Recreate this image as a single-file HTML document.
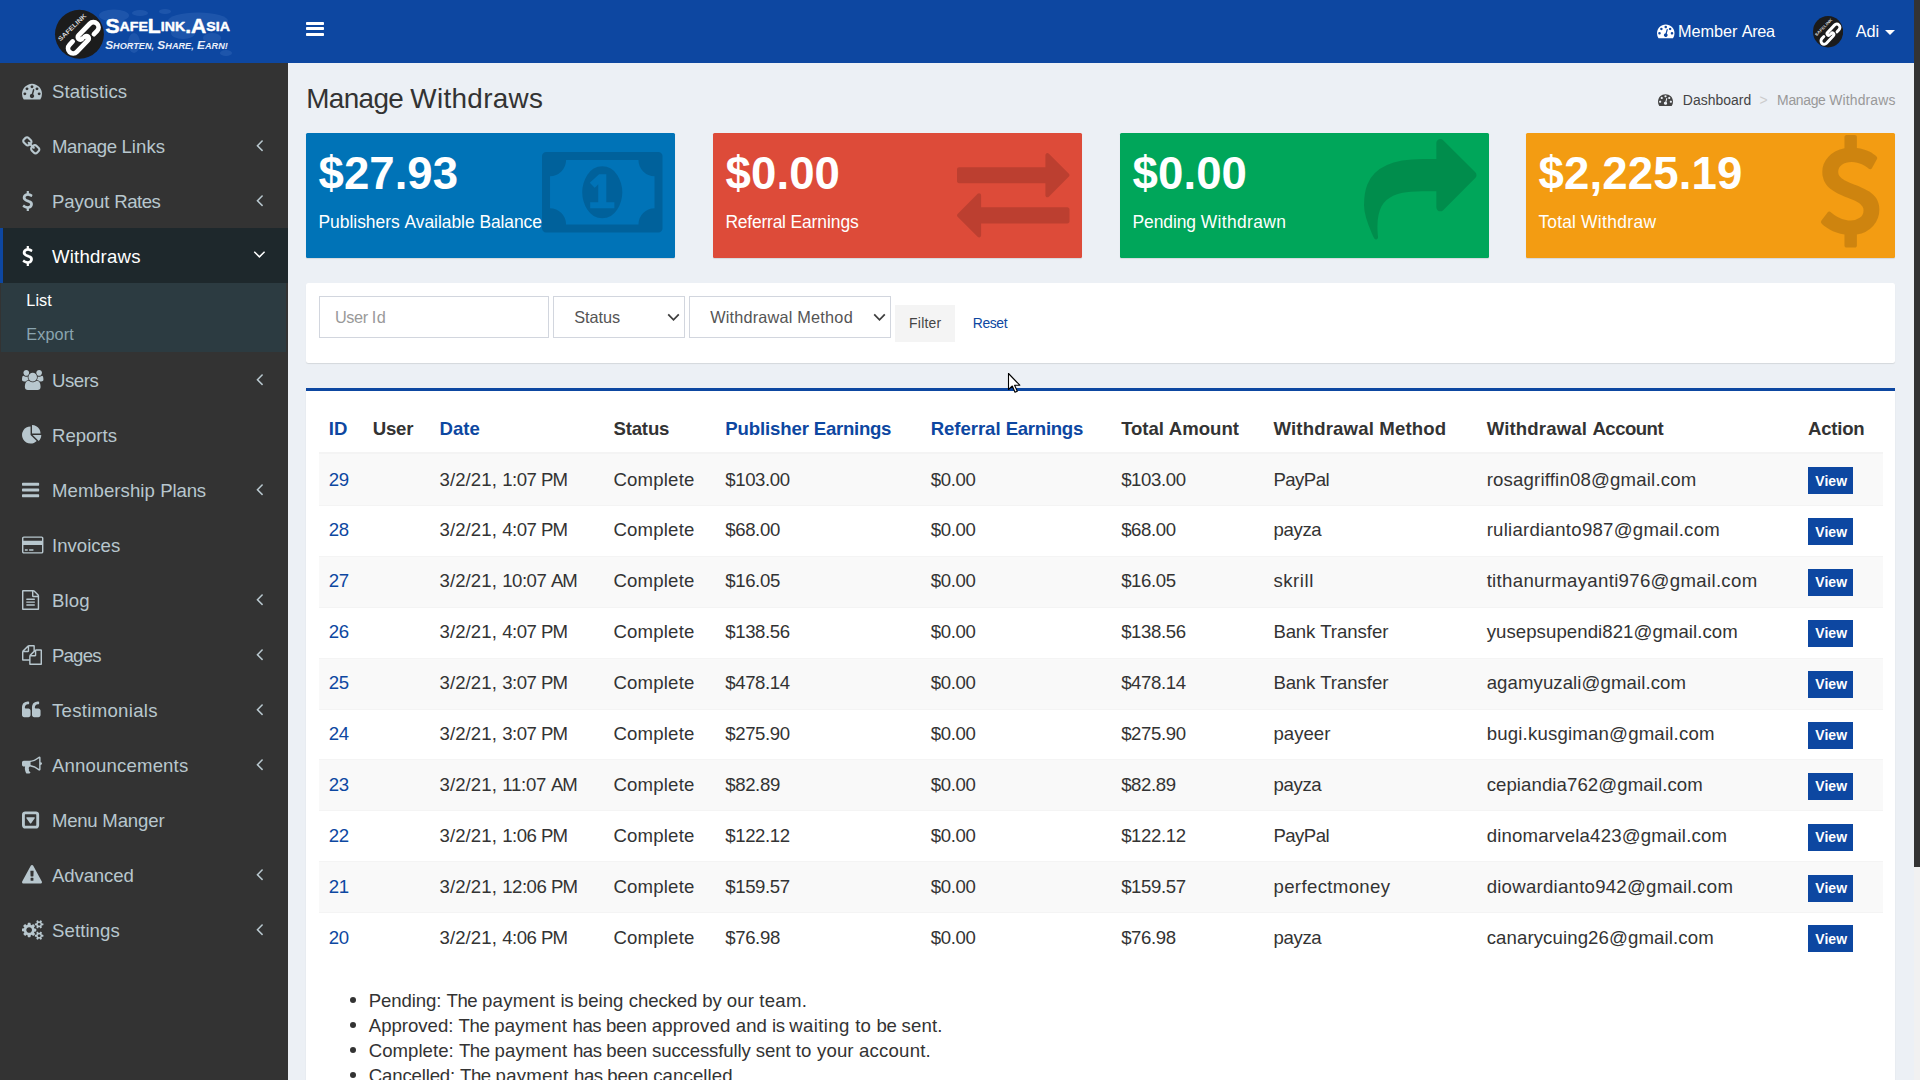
<!DOCTYPE html>
<html lang="en"><head>
<meta charset="utf-8">
<title>Manage Withdraws</title>
<style>
*{box-sizing:border-box}
html,body{margin:0;padding:0}
html{width:1920px;height:1080px;overflow:hidden;background:#ecf0f5}
body{width:1920px;height:1080px;overflow:hidden;position:relative;background:#ecf0f5;
 font-family:"Liberation Sans",sans-serif;font-size:20px;line-height:25px;color:#333;
 -webkit-font-smoothing:auto}
a{color:#0d47a1;text-decoration:none}
ul{margin:0;padding:0;list-style:none}
svg.fa{display:inline-block;fill:currentColor;vertical-align:baseline;overflow:visible;flex:none}
.t{white-space:pre;line-height:0}

/* header */
.main-header{position:absolute;left:0;top:0;width:1913.75px;height:62.5px;background:#0d47a1;z-index:5}
.logo{position:absolute;left:0;top:0;width:287.5px;height:62.5px;display:block}
.logo svg{position:absolute;left:0;top:0}
.sidebar-toggle{position:absolute;left:306px;top:21.6px;width:18px;height:15px}
.sidebar-toggle i{position:absolute;left:0;width:18px;height:3.3px;border-radius:.8px;background:#fff}
.nav-right{position:absolute;left:0;top:0;width:1913.75px;height:62.5px;color:#fff;font-size:17.5px;line-height:25px}
.nav-right a{color:#fff}
.nav-member{position:absolute;left:1678px;top:18.75px;height:25px;white-space:nowrap}
.nav-ic{position:absolute;left:1657px;top:21.5px;line-height:0}
.nav-user{position:absolute;left:1812.5px;top:18.75px;height:25px;white-space:nowrap}
.avatar{position:absolute;left:1812.7px;top:16.4px;width:30.2px;height:31.4px}
.caret{position:absolute;left:1885.3px;top:29.8px;width:0;height:0;border-left:5px solid transparent;border-right:5px solid transparent;border-top:5.4px solid #fff}

/* sidebar */
.main-sidebar{position:absolute;left:0;top:0;width:287.5px;height:1080px;background:#333;padding-top:62.5px;z-index:2}
.sidebar-menu>li{position:relative}
.sidebar-menu>li>a{display:block;height:55px;padding:15px 6.25px 15px 18.75px;border-left:3px solid transparent;color:#b8c7ce;white-space:nowrap;line-height:25px;font-size:20px}
.sidebar-menu>li>a{position:relative;padding-left:49px}
.sidebar-menu>li>a>.icw{position:absolute;left:19.1px;top:18.4px;width:25px;height:20px;line-height:0}
svg.fa{vertical-align:top}
.sidebar-menu>li.active>a{background:#1e282c;color:#fff;border-left-color:#0d47a1}
.sidebar-menu .arr{position:absolute;left:246.8px;top:17.5px;width:20px;height:20px;line-height:0;text-align:center}
.sidebar-menu .active .arr{top:16.9px}
.treeview-menu{margin:0 1.25px;padding:0 0 .5px 6.25px;background:#2c3b41}
.treeview-menu>li>a{display:block;height:34.375px;padding:4.6875px 6.25px 4.6875px 18.75px;color:#8aa4af;font-size:17.5px;line-height:25px}
.treeview-menu>li.active>a{color:#fff}

/* content */
.content-wrapper{position:absolute;left:287.5px;top:62.5px;width:1626.25px;height:1017.5px;background:#ecf0f5}
.content-header{position:relative;padding:18.75px 18.75px 0 18.75px;height:51.75px}
.content-header h1{margin:0;font-size:30px;line-height:33px;font-weight:400;color:#333}
.breadcrumb{position:absolute;top:26.5px;left:0;width:1626.25px;height:21.43px;font-size:15px;line-height:21.43px;white-space:nowrap;color:#999}
.breadcrumb>*{position:absolute;top:0}
.breadcrumb .bic{line-height:0;color:#444;top:3.2px}
.breadcrumb a{color:#444}
.breadcrumb .sep{color:#ccc}
.content{padding:18.75px 18.75px 0 18.75px}
.row{position:relative;height:150px}
.col{position:absolute;top:0;width:369px}
.small-box{position:relative;height:125px;margin-bottom:25px;color:#fff;overflow:hidden;border-radius:1.5px;box-shadow:0 1px 1px rgba(0,0,0,.1)}
.small-box .inner{padding:12.5px}
.small-box h3{margin:0 0 11px 0;font-size:47.5px;line-height:52.25px;font-weight:700;white-space:nowrap}
.small-box p{margin:0;font-size:18.75px;line-height:26.8px}
.small-box .icon{position:absolute;color:rgba(0,0,0,.15);line-height:0}
.bg-blue{background:#0073b7}.bg-red{background:#dd4b39}.bg-green{background:#00a65a}.bg-yellow{background:#f39c12}
.box{position:relative;background:#fff;border-radius:2.5px;box-shadow:0 1px 1px rgba(0,0,0,.1);margin-bottom:25px}
.box-filter{height:80px;padding:12.5px;border-top:0}
.box-primary{border-top:3px solid #0d47a1;padding:12.5px;height:720px;border-radius:0;margin-bottom:0}
.fc{position:absolute;top:13.25px;height:41.5px;border:1px solid #d2d6de;background:#fff;font-size:17.5px;line-height:25px;color:#555;white-space:nowrap;padding:7.25px 0 0 15px}
.fc.sel{padding-left:20px}
.fc .ph{color:#999}
.fc .chev{position:absolute;top:16.2px}
.btn-filter{position:absolute;left:589px;top:21.75px;width:60px;height:37px;background:#f4f4f4;border:1px solid #f4f4f4;border-radius:0;font-size:15px;line-height:22.5px;color:#444;text-align:center;padding:6px 0}
.btn-reset{position:absolute;left:654px;top:21.75px;height:37px;font-size:15px;line-height:22.5px;padding:7.25px 12.5px;color:#0d47a1}

table{border-collapse:separate;border-spacing:0;width:100%;font-size:20px;line-height:28.57px}
th,td{padding:10px;text-align:left;vertical-align:top;white-space:nowrap}
th{font-weight:700;height:50.57px;border-bottom:2px solid #f4f4f4}
td{height:50.9px;border-top:1px solid #f4f4f4;position:relative}
tbody tr:first-child td{border-top:0;padding-top:11px}
tbody tr:first-child .btn-view{top:13.35px}
tbody tr:nth-child(odd) td{background:#f9f9f9}
.btn-view{position:absolute;left:10px;top:12.35px;width:45px;height:27px;display:block;background:#0d47a1;color:#fff;font-size:15px;line-height:22.5px;font-weight:700;padding:2.25px 0 0 7.25px;border-radius:0}
.notes{margin:24.1px 0 0 0;padding:0 0 0 50px;list-style:disc;font-size:20px;line-height:25px}
.notes li{white-space:nowrap}

/* scrollbar */
.sb-track{position:absolute;left:1913.75px;top:0;width:6.25px;height:1080px;background:#f1f1f1;z-index:9}
.sb-thumb{position:absolute;left:1913.75px;top:0;width:6.25px;height:867px;background:#333;z-index:10}
.cursor{position:absolute;left:1007px;top:372px;z-index:20}

</style>
</head>
<body>
<header class="main-header">
<a class="logo" href="#"><svg width="287.5" height="62.5" viewBox="0 0 287.5 62.5">
<g fill="#5f8fd6" opacity=".2">
<ellipse cx="114" cy="15.5" rx="15" ry="6"></ellipse><ellipse cx="121" cy="25" rx="8" ry="5"></ellipse><ellipse cx="134" cy="43" rx="6" ry="10"></ellipse>
<ellipse cx="140" cy="13" rx="8" ry="3"></ellipse><ellipse cx="165" cy="11.5" rx="6" ry="2.5"></ellipse>
<ellipse cx="198" cy="21" rx="30" ry="8.5"></ellipse><ellipse cx="183" cy="33" rx="12" ry="6"></ellipse>
<ellipse cx="226" cy="53" rx="6" ry="3"></ellipse><ellipse cx="212" cy="38" rx="9" ry="5"></ellipse>
</g>
<circle cx="79.45" cy="34.25" r="24.45" fill="#1c1c1c"></circle>
<g transform="translate(83.3,37.8) rotate(-46) scale(1.0)" fill="none" stroke="#fff" stroke-width="4.7" stroke-linecap="round" stroke-linejoin="round"><path d="M10.00,5.10 L14.60,5.10 A5.1,5.1 0 0 0 14.60,-5.10 L-1.60,-5.10 A2.45,2.45 0 0 0 -1.60,-0.20"></path><path d="M-10.00,-5.10 L-14.60,-5.10 A5.1,5.1 0 0 0 -14.60,5.10 L1.60,5.10 A2.45,2.45 0 0 0 1.60,0.20"></path></g>
<text transform="translate(60.6,41.6) rotate(-44)" font-family="'Liberation Sans',sans-serif" font-size="6.3" font-weight="700" fill="#d6d6d6" textLength="36.5" lengthAdjust="spacingAndGlyphs">SAFELINK</text>
<text x="105.4" y="32.7" font-family="'Liberation Sans',sans-serif" font-weight="700" fill="#fff" stroke="#fff" stroke-width=".45" stroke-linejoin="round" font-size="19.4" textLength="124.6" lengthAdjust="spacingAndGlyphs">S<tspan font-size="13" dy="-1.4">AFE</tspan><tspan dy="1.4">L</tspan><tspan font-size="13" dy="-1.4">INK</tspan><tspan dy="1.4">.A</tspan><tspan font-size="13" dy="-1.4">SIA</tspan></text>
<text x="105.2" y="48.6" font-family="'Liberation Sans',sans-serif" font-weight="700" font-style="italic" fill="#e9effa" font-size="10.8" textLength="122.6" lengthAdjust="spacingAndGlyphs">S<tspan font-size="8.3">HORTEN,</tspan> S<tspan font-size="8.3">HARE,</tspan> E<tspan font-size="8.3">ARN!</tspan></text>
</svg></a>
<a class="sidebar-toggle" href="#"><i style="top:0"></i><i style="top:5.55px"></i><i style="top:11.2px"></i></a>
<div class="nav-right">
<span class="nav-ic"><svg class="fa " style="width:17.500px;height:17.500px;" viewBox="0 0 1792 1792" aria-hidden="true"><path transform="translate(0,1536) scale(1,-1)" d="M384 384q0 53 -37.5 90.5t-90.5 37.5t-90.5 -37.5t-37.5 -90.5t37.5 -90.5t90.5 -37.5t90.5 37.5t37.5 90.5zM576 832q0 53 -37.5 90.5t-90.5 37.5t-90.5 -37.5t-37.5 -90.5t37.5 -90.5t90.5 -37.5t90.5 37.5t37.5 90.5zM1004 351l101 382q6 26 -7.5 48.5t-38.5 29.5 t-48 -6.5t-30 -39.5l-101 -382q-60 -5 -107 -43.5t-63 -98.5q-20 -77 20 -146t117 -89t146 20t89 117q16 60 -6 117t-72 91zM1664 384q0 53 -37.5 90.5t-90.5 37.5t-90.5 -37.5t-37.5 -90.5t37.5 -90.5t90.5 -37.5t90.5 37.5t37.5 90.5zM1024 1024q0 53 -37.5 90.5 t-90.5 37.5t-90.5 -37.5t-37.5 -90.5t37.5 -90.5t90.5 -37.5t90.5 37.5t37.5 90.5zM1472 832q0 53 -37.5 90.5t-90.5 37.5t-90.5 -37.5t-37.5 -90.5t37.5 -90.5t90.5 -37.5t90.5 37.5t37.5 90.5zM1792 384q0 -261 -141 -483q-19 -29 -54 -29h-1402q-35 0 -54 29 q-141 221 -141 483q0 182 71 348t191 286t286 191t348 71t348 -71t286 -191t191 -286t71 -348z"></path></svg></span><a class="nav-member" href="#"><span class="t" style="font-size: 16.28px; letter-spacing: -0.049px; position: relative; top: 0px;">Member </span><span class="t" style="font-size: 16.28px; letter-spacing: -0.422px; position: relative; top: 0px;">Area</span></a>
<svg class="avatar" viewBox="0 0 48.6 48.6" preserveAspectRatio="none"><circle cx="24.3" cy="24.3" r="24.3" fill="#1b1b1b"></circle><g transform="translate(28.1,28.1) rotate(-46) scale(1.0)" fill="none" stroke="#fff" stroke-width="4.7" stroke-linecap="round" stroke-linejoin="round"><path d="M10.00,5.10 L14.60,5.10 A5.1,5.1 0 0 0 14.60,-5.10 L-1.60,-5.10 A2.45,2.45 0 0 0 -1.60,-0.20"></path><path d="M-10.00,-5.10 L-14.60,-5.10 A5.1,5.1 0 0 0 -14.60,5.10 L1.60,5.10 A2.45,2.45 0 0 0 1.60,0.20"></path></g><text transform="translate(5.5,31.7) rotate(-44)" font-family="'Liberation Sans',sans-serif" font-size="6.3" font-weight="700" fill="#d6d6d6" textLength="36.5" lengthAdjust="spacingAndGlyphs">SAFELINK</text></svg>
<a class="nav-user" href="#" style="left:1855.7px"><span class="t" style="font-size: 16.28px; letter-spacing: 0.005px; position: relative; top: 0px;">Adi</span></a>
<span class="caret"></span>
</div>
</header>
<aside class="main-sidebar"><ul class="sidebar-menu"><li><a href="#"><span class="icw"><svg class="fa " style="width:20.000px;height:20.000px;" viewBox="0 0 1792 1792" aria-hidden="true"><path transform="translate(0,1536) scale(1,-1)" d="M384 384q0 53 -37.5 90.5t-90.5 37.5t-90.5 -37.5t-37.5 -90.5t37.5 -90.5t90.5 -37.5t90.5 37.5t37.5 90.5zM576 832q0 53 -37.5 90.5t-90.5 37.5t-90.5 -37.5t-37.5 -90.5t37.5 -90.5t90.5 -37.5t90.5 37.5t37.5 90.5zM1004 351l101 382q6 26 -7.5 48.5t-38.5 29.5 t-48 -6.5t-30 -39.5l-101 -382q-60 -5 -107 -43.5t-63 -98.5q-20 -77 20 -146t117 -89t146 20t89 117q16 60 -6 117t-72 91zM1664 384q0 53 -37.5 90.5t-90.5 37.5t-90.5 -37.5t-37.5 -90.5t37.5 -90.5t90.5 -37.5t90.5 37.5t37.5 90.5zM1024 1024q0 53 -37.5 90.5 t-90.5 37.5t-90.5 -37.5t-37.5 -90.5t37.5 -90.5t90.5 -37.5t90.5 37.5t37.5 90.5zM1472 832q0 53 -37.5 90.5t-90.5 37.5t-90.5 -37.5t-37.5 -90.5t37.5 -90.5t90.5 -37.5t90.5 37.5t37.5 90.5zM1792 384q0 -261 -141 -483q-19 -29 -54 -29h-1402q-35 0 -54 29 q-141 221 -141 483q0 182 71 348t191 286t286 191t348 71t348 -71t286 -191t191 -286t71 -348z"></path></svg></span> <span class="t" style="font-size: 18.6px; letter-spacing: 0.078px; position: relative; top: 1px;">Statistics</span></a></li><li><a href="#"><span class="icw"><svg class="fa " style="width:18.571px;height:20.000px;" viewBox="0 0 1664 1792" aria-hidden="true"><path transform="translate(0,1536) scale(1,-1)" d="M1456 320q0 40 -28 68l-208 208q-28 28 -68 28q-42 0 -72 -32q3 -3 19 -18.5t21.5 -21.5t15 -19t13 -25.5t3.5 -27.5q0 -40 -28 -68t-68 -28q-15 0 -27.5 3.5t-25.5 13t-19 15t-21.5 21.5t-18.5 19q-33 -31 -33 -73q0 -40 28 -68l206 -207q27 -27 68 -27q40 0 68 26 l147 146q28 28 28 67zM753 1025q0 40 -28 68l-206 207q-28 28 -68 28q-39 0 -68 -27l-147 -146q-28 -28 -28 -67q0 -40 28 -68l208 -208q27 -27 68 -27q42 0 72 31q-3 3 -19 18.5t-21.5 21.5t-15 19t-13 25.5t-3.5 27.5q0 40 28 68t68 28q15 0 27.5 -3.5t25.5 -13t19 -15 t21.5 -21.5t18.5 -19q33 31 33 73zM1648 320q0 -120 -85 -203l-147 -146q-83 -83 -203 -83q-121 0 -204 85l-206 207q-83 83 -83 203q0 123 88 209l-88 88q-86 -88 -208 -88q-120 0 -204 84l-208 208q-84 84 -84 204t85 203l147 146q83 83 203 83q121 0 204 -85l206 -207 q83 -83 83 -203q0 -123 -88 -209l88 -88q86 88 208 88q120 0 204 -84l208 -208q84 -84 84 -204z"></path></svg></span> <span class="t" style="font-size: 18.6px; letter-spacing: -0.426px; position: relative; top: 1px;">Manage </span><span class="t" style="font-size: 18.6px; letter-spacing: 0.091px; position: relative; top: 1px;">Links</span><span class="arr"><svg class="fa " style="width:7.143px;height:20.000px;" viewBox="0 0 640 1792" aria-hidden="true"><path transform="translate(0,1536) scale(1,-1)" d="M627 992q0 -13 -10 -23l-393 -393l393 -393q10 -10 10 -23t-10 -23l-50 -50q-10 -10 -23 -10t-23 10l-466 466q-10 10 -10 23t10 23l466 466q10 10 23 10t23 -10l50 -50q10 -10 10 -23z"></path></svg></span></a></li><li><a href="#"><span class="icw"><svg class="fa " style="width:11.429px;height:20.000px;" viewBox="0 0 1024 1792" aria-hidden="true"><path transform="translate(0,1536) scale(1,-1)" d="M978 351q0 -153 -99.5 -263.5t-258.5 -136.5v-175q0 -14 -9 -23t-23 -9h-135q-13 0 -22.5 9.5t-9.5 22.5v175q-66 9 -127.5 31t-101.5 44.5t-74 48t-46.5 37.5t-17.5 18q-17 21 -2 41l103 135q7 10 23 12q15 2 24 -9l2 -2q113 -99 243 -125q37 -8 74 -8q81 0 142.5 43 t61.5 122q0 28 -15 53t-33.5 42t-58.5 37.5t-66 32t-80 32.5q-39 16 -61.5 25t-61.5 26.5t-62.5 31t-56.5 35.5t-53.5 42.5t-43.5 49t-35.5 58t-21 66.5t-8.5 78q0 138 98 242t255 134v180q0 13 9.5 22.5t22.5 9.5h135q14 0 23 -9t9 -23v-176q57 -6 110.5 -23t87 -33.5 t63.5 -37.5t39 -29t15 -14q17 -18 5 -38l-81 -146q-8 -15 -23 -16q-14 -3 -27 7q-3 3 -14.5 12t-39 26.5t-58.5 32t-74.5 26t-85.5 11.5q-95 0 -155 -43t-60 -111q0 -26 8.5 -48t29.5 -41.5t39.5 -33t56 -31t60.5 -27t70 -27.5q53 -20 81 -31.5t76 -35t75.5 -42.5t62 -50 t53 -63.5t31.5 -76.5t13 -94z"></path></svg></span> <span class="t" style="font-size: 18.6px; letter-spacing: -0.109px; position: relative; top: 1px;">Payout </span><span class="t" style="font-size: 18.6px; letter-spacing: -0.534px; position: relative; top: 1px;">Rates</span><span class="arr"><svg class="fa " style="width:7.143px;height:20.000px;" viewBox="0 0 640 1792" aria-hidden="true"><path transform="translate(0,1536) scale(1,-1)" d="M627 992q0 -13 -10 -23l-393 -393l393 -393q10 -10 10 -23t-10 -23l-50 -50q-10 -10 -23 -10t-23 10l-466 466q-10 10 -10 23t10 23l466 466q10 10 23 10t23 -10l50 -50q10 -10 10 -23z"></path></svg></span></a></li><li class="active"><a href="#"><span class="icw"><svg class="fa " style="width:11.429px;height:20.000px;" viewBox="0 0 1024 1792" aria-hidden="true"><path transform="translate(0,1536) scale(1,-1)" d="M978 351q0 -153 -99.5 -263.5t-258.5 -136.5v-175q0 -14 -9 -23t-23 -9h-135q-13 0 -22.5 9.5t-9.5 22.5v175q-66 9 -127.5 31t-101.5 44.5t-74 48t-46.5 37.5t-17.5 18q-17 21 -2 41l103 135q7 10 23 12q15 2 24 -9l2 -2q113 -99 243 -125q37 -8 74 -8q81 0 142.5 43 t61.5 122q0 28 -15 53t-33.5 42t-58.5 37.5t-66 32t-80 32.5q-39 16 -61.5 25t-61.5 26.5t-62.5 31t-56.5 35.5t-53.5 42.5t-43.5 49t-35.5 58t-21 66.5t-8.5 78q0 138 98 242t255 134v180q0 13 9.5 22.5t22.5 9.5h135q14 0 23 -9t9 -23v-176q57 -6 110.5 -23t87 -33.5 t63.5 -37.5t39 -29t15 -14q17 -18 5 -38l-81 -146q-8 -15 -23 -16q-14 -3 -27 7q-3 3 -14.5 12t-39 26.5t-58.5 32t-74.5 26t-85.5 11.5q-95 0 -155 -43t-60 -111q0 -26 8.5 -48t29.5 -41.5t39.5 -33t56 -31t60.5 -27t70 -27.5q53 -20 81 -31.5t76 -35t75.5 -42.5t62 -50 t53 -63.5t31.5 -76.5t13 -94z"></path></svg></span> <span class="t" style="font-size: 18.6px; letter-spacing: 0.21px; position: relative; top: 1px;">Withdraws</span><span class="arr"><svg class="fa " style="width:12.857px;height:20.000px;" viewBox="0 0 1152 1792" aria-hidden="true"><path transform="translate(0,1536) scale(1,-1)" d="M1075 800q0 -13 -10 -23l-466 -466q-10 -10 -23 -10t-23 10l-466 466q-10 10 -10 23t10 23l50 50q10 10 23 10t23 -10l393 -393l393 393q10 10 23 10t23 -10l50 -50q10 -10 10 -23z"></path></svg></span></a><ul class="treeview-menu"><li class="active"><a href="#"><span class="t" style="font-size: 16.28px; letter-spacing: 0.098px; position: relative; top: 0.6px;">List</span></a></li><li><a href="#"><span class="t" style="font-size: 16.28px; letter-spacing: 0.109px; position: relative; top: 0px;">Export</span></a></li></ul></li><li><a href="#"><span class="icw"><svg class="fa " style="width:21.429px;height:20.000px;" viewBox="0 0 1920 1792" aria-hidden="true"><path transform="translate(0,1536) scale(1,-1)" d="M593 640q-162 -5 -265 -128h-134q-82 0 -138 40.5t-56 118.5q0 353 124 353q6 0 43.5 -21t97.5 -42.5t119 -21.5q67 0 133 23q-5 -37 -5 -66q0 -139 81 -256zM1664 3q0 -120 -73 -189.5t-194 -69.5h-874q-121 0 -194 69.5t-73 189.5q0 53 3.5 103.5t14 109t26.5 108.5 t43 97.5t62 81t85.5 53.5t111.5 20q10 0 43 -21.5t73 -48t107 -48t135 -21.5t135 21.5t107 48t73 48t43 21.5q61 0 111.5 -20t85.5 -53.5t62 -81t43 -97.5t26.5 -108.5t14 -109t3.5 -103.5zM640 1280q0 -106 -75 -181t-181 -75t-181 75t-75 181t75 181t181 75t181 -75 t75 -181zM1344 896q0 -159 -112.5 -271.5t-271.5 -112.5t-271.5 112.5t-112.5 271.5t112.5 271.5t271.5 112.5t271.5 -112.5t112.5 -271.5zM1920 671q0 -78 -56 -118.5t-138 -40.5h-134q-103 123 -265 128q81 117 81 256q0 29 -5 66q66 -23 133 -23q59 0 119 21.5t97.5 42.5 t43.5 21q124 0 124 -353zM1792 1280q0 -106 -75 -181t-181 -75t-181 75t-75 181t75 181t181 75t181 -75t75 -181z"></path></svg></span> <span class="t" style="font-size: 18.6px; letter-spacing: -0.438px; position: relative; top: 1px;">Users</span><span class="arr"><svg class="fa " style="width:7.143px;height:20.000px;" viewBox="0 0 640 1792" aria-hidden="true"><path transform="translate(0,1536) scale(1,-1)" d="M627 992q0 -13 -10 -23l-393 -393l393 -393q10 -10 10 -23t-10 -23l-50 -50q-10 -10 -23 -10t-23 10l-466 466q-10 10 -10 23t10 23l466 466q10 10 23 10t23 -10l50 -50q10 -10 10 -23z"></path></svg></span></a></li><li><a href="#"><span class="icw"><svg class="fa " style="width:20.000px;height:20.000px;" viewBox="0 0 1792 1792" aria-hidden="true"><path transform="translate(0,1536) scale(1,-1)" d="M768 646l546 -546q-106 -108 -247.5 -168t-298.5 -60q-209 0 -385.5 103t-279.5 279.5t-103 385.5t103 385.5t279.5 279.5t385.5 103v-762zM955 640h773q0 -157 -60 -298.5t-168 -247.5zM1664 768h-768v768q209 0 385.5 -103t279.5 -279.5t103 -385.5z"></path></svg></span> <span class="t" style="font-size: 18.6px; letter-spacing: -0.027px; position: relative; top: 1px;">Reports</span></a></li><li><a href="#"><span class="icw"><svg class="fa " style="width:17.143px;height:20.000px;" viewBox="0 0 1536 1792" aria-hidden="true"><path transform="translate(0,1536) scale(1,-1)" d="M1536 192v-128q0 -26 -19 -45t-45 -19h-1408q-26 0 -45 19t-19 45v128q0 26 19 45t45 19h1408q26 0 45 -19t19 -45zM1536 704v-128q0 -26 -19 -45t-45 -19h-1408q-26 0 -45 19t-19 45v128q0 26 19 45t45 19h1408q26 0 45 -19t19 -45zM1536 1216v-128q0 -26 -19 -45 t-45 -19h-1408q-26 0 -45 19t-19 45v128q0 26 19 45t45 19h1408q26 0 45 -19t19 -45z"></path></svg></span> <span class="t" style="font-size: 18.6px; letter-spacing: 0.064px; position: relative; top: 1px;">Membership </span><span class="t" style="font-size: 18.6px; letter-spacing: -0.138px; position: relative; top: 1px;">Plans</span><span class="arr"><svg class="fa " style="width:7.143px;height:20.000px;" viewBox="0 0 640 1792" aria-hidden="true"><path transform="translate(0,1536) scale(1,-1)" d="M627 992q0 -13 -10 -23l-393 -393l393 -393q10 -10 10 -23t-10 -23l-50 -50q-10 -10 -23 -10t-23 10l-466 466q-10 10 -10 23t10 23l466 466q10 10 23 10t23 -10l50 -50q10 -10 10 -23z"></path></svg></span></a></li><li><a href="#"><span class="icw"><svg class="fa " style="width:21.429px;height:20.000px;" viewBox="0 0 1920 1792" aria-hidden="true"><path transform="translate(0,1536) scale(1,-1)" d="M1760 1408q66 0 113 -47t47 -113v-1216q0 -66 -47 -113t-113 -47h-1600q-66 0 -113 47t-47 113v1216q0 66 47 113t113 47h1600zM160 1280q-13 0 -22.5 -9.5t-9.5 -22.5v-224h1664v224q0 13 -9.5 22.5t-22.5 9.5h-1600zM1760 0q13 0 22.5 9.5t9.5 22.5v608h-1664v-608 q0 -13 9.5 -22.5t22.5 -9.5h1600zM256 128v128h256v-128h-256zM640 128v128h384v-128h-384z"></path></svg></span> <span class="t" style="font-size: 18.6px; letter-spacing: 0.002px; position: relative; top: 1px;">Invoices</span></a></li><li><a href="#"><span class="icw"><svg class="fa " style="width:17.143px;height:20.000px;" viewBox="0 0 1536 1792" aria-hidden="true"><path transform="translate(0,1536) scale(1,-1)" d="M1468 1156q28 -28 48 -76t20 -88v-1152q0 -40 -28 -68t-68 -28h-1344q-40 0 -68 28t-28 68v1600q0 40 28 68t68 28h896q40 0 88 -20t76 -48zM1024 1400v-376h376q-10 29 -22 41l-313 313q-12 12 -41 22zM1408 -128v1024h-416q-40 0 -68 28t-28 68v416h-768v-1536h1280z M384 736q0 14 9 23t23 9h704q14 0 23 -9t9 -23v-64q0 -14 -9 -23t-23 -9h-704q-14 0 -23 9t-9 23v64zM1120 512q14 0 23 -9t9 -23v-64q0 -14 -9 -23t-23 -9h-704q-14 0 -23 9t-9 23v64q0 14 9 23t23 9h704zM1120 256q14 0 23 -9t9 -23v-64q0 -14 -9 -23t-23 -9h-704 q-14 0 -23 9t-9 23v64q0 14 9 23t23 9h704z"></path></svg></span> <span class="t" style="font-size: 18.6px; letter-spacing: 0.141px; position: relative; top: 1px;">Blog</span><span class="arr"><svg class="fa " style="width:7.143px;height:20.000px;" viewBox="0 0 640 1792" aria-hidden="true"><path transform="translate(0,1536) scale(1,-1)" d="M627 992q0 -13 -10 -23l-393 -393l393 -393q10 -10 10 -23t-10 -23l-50 -50q-10 -10 -23 -10t-23 10l-466 466q-10 10 -10 23t10 23l466 466q10 10 23 10t23 -10l50 -50q10 -10 10 -23z"></path></svg></span></a></li><li><a href="#"><span class="icw"><svg class="fa " style="width:20.000px;height:20.000px;" viewBox="0 0 1792 1792" aria-hidden="true"><path transform="translate(0,1536) scale(1,-1)" d="M1696 1152q40 0 68 -28t28 -68v-1216q0 -40 -28 -68t-68 -28h-960q-40 0 -68 28t-28 68v288h-544q-40 0 -68 28t-28 68v672q0 40 20 88t48 76l408 408q28 28 76 48t88 20h416q40 0 68 -28t28 -68v-328q68 40 128 40h416zM1152 939l-299 -299h299v299zM512 1323l-299 -299 h299v299zM708 676l316 316v416h-384v-416q0 -40 -28 -68t-68 -28h-416v-640h512v256q0 40 20 88t48 76zM1664 -128v1152h-384v-416q0 -40 -28 -68t-68 -28h-416v-640h896z"></path></svg></span> <span class="t" style="font-size: 18.6px; letter-spacing: -0.816px; position: relative; top: 1px;">Pages</span><span class="arr"><svg class="fa " style="width:7.143px;height:20.000px;" viewBox="0 0 640 1792" aria-hidden="true"><path transform="translate(0,1536) scale(1,-1)" d="M627 992q0 -13 -10 -23l-393 -393l393 -393q10 -10 10 -23t-10 -23l-50 -50q-10 -10 -23 -10t-23 10l-466 466q-10 10 -10 23t10 23l466 466q10 10 23 10t23 -10l50 -50q10 -10 10 -23z"></path></svg></span></a></li><li><a href="#"><span class="icw"><svg class="fa " style="width:18.571px;height:20.000px;" viewBox="0 0 1664 1792" aria-hidden="true"><path transform="translate(0,1536) scale(1,-1)" d="M768 576v-384q0 -80 -56 -136t-136 -56h-384q-80 0 -136 56t-56 136v704q0 104 40.5 198.5t109.5 163.5t163.5 109.5t198.5 40.5h64q26 0 45 -19t19 -45v-128q0 -26 -19 -45t-45 -19h-64q-106 0 -181 -75t-75 -181v-32q0 -40 28 -68t68 -28h224q80 0 136 -56t56 -136z M1664 576v-384q0 -80 -56 -136t-136 -56h-384q-80 0 -136 56t-56 136v704q0 104 40.5 198.5t109.5 163.5t163.5 109.5t198.5 40.5h64q26 0 45 -19t19 -45v-128q0 -26 -19 -45t-45 -19h-64q-106 0 -181 -75t-75 -181v-32q0 -40 28 -68t68 -28h224q80 0 136 -56t56 -136z"></path></svg></span> <span class="t" style="font-size: 18.6px; letter-spacing: 0.293px; position: relative; top: 1px;">Testimonials</span><span class="arr"><svg class="fa " style="width:7.143px;height:20.000px;" viewBox="0 0 640 1792" aria-hidden="true"><path transform="translate(0,1536) scale(1,-1)" d="M627 992q0 -13 -10 -23l-393 -393l393 -393q10 -10 10 -23t-10 -23l-50 -50q-10 -10 -23 -10t-23 10l-466 466q-10 10 -10 23t10 23l466 466q10 10 23 10t23 -10l50 -50q10 -10 10 -23z"></path></svg></span></a></li><li><a href="#"><span class="icw"><svg class="fa " style="width:20.000px;height:20.000px;" viewBox="0 0 1792 1792" aria-hidden="true"><path transform="translate(0,1536) scale(1,-1)" d="M1664 896q53 0 90.5 -37.5t37.5 -90.5t-37.5 -90.5t-90.5 -37.5v-384q0 -52 -38 -90t-90 -38q-417 347 -812 380q-58 -19 -91 -66t-31 -100.5t40 -92.5q-20 -33 -23 -65.5t6 -58t33.5 -55t48 -50t61.5 -50.5q-29 -58 -111.5 -83t-168.5 -11.5t-132 55.5q-7 23 -29.5 87.5 t-32 94.5t-23 89t-15 101t3.5 98.5t22 110.5h-122q-66 0 -113 47t-47 113v192q0 66 47 113t113 47h480q435 0 896 384q52 0 90 -38t38 -90v-384zM1536 292v954q-394 -302 -768 -343v-270q377 -42 768 -341z"></path></svg></span> <span class="t" style="font-size: 18.6px; letter-spacing: 0.155px; position: relative; top: 1px;">Announcements</span><span class="arr"><svg class="fa " style="width:7.143px;height:20.000px;" viewBox="0 0 640 1792" aria-hidden="true"><path transform="translate(0,1536) scale(1,-1)" d="M627 992q0 -13 -10 -23l-393 -393l393 -393q10 -10 10 -23t-10 -23l-50 -50q-10 -10 -23 -10t-23 10l-466 466q-10 10 -10 23t10 23l466 466q10 10 23 10t23 -10l50 -50q10 -10 10 -23z"></path></svg></span></a></li><li><a href="#"><span class="icw"><svg class="fa " style="width:17.143px;height:20.000px;" viewBox="0 0 1536 1792" aria-hidden="true"><path transform="translate(0,1536) scale(1,-1)" d="M1145 861q18 -35 -5 -66l-320 -448q-19 -27 -52 -27t-52 27l-320 448q-23 31 -5 66q17 35 57 35h640q40 0 57 -35zM1280 160v960q0 13 -9.5 22.5t-22.5 9.5h-960q-13 0 -22.5 -9.5t-9.5 -22.5v-960q0 -13 9.5 -22.5t22.5 -9.5h960q13 0 22.5 9.5t9.5 22.5zM1536 1120 v-960q0 -119 -84.5 -203.5t-203.5 -84.5h-960q-119 0 -203.5 84.5t-84.5 203.5v960q0 119 84.5 203.5t203.5 84.5h960q119 0 203.5 -84.5t84.5 -203.5z"></path></svg></span> <span class="t" style="font-size: 18.6px; letter-spacing: -0.281px; position: relative; top: 1px;">Menu </span><span class="t" style="font-size: 18.6px; letter-spacing: -0.138px; position: relative; top: 1px;">Manger</span></a></li><li><a href="#"><span class="icw"><svg class="fa " style="width:20.000px;height:20.000px;" viewBox="0 0 1792 1792" aria-hidden="true"><path transform="translate(0,1536) scale(1,-1)" d="M1024 161v190q0 14 -9.5 23.5t-22.5 9.5h-192q-13 0 -22.5 -9.5t-9.5 -23.5v-190q0 -14 9.5 -23.5t22.5 -9.5h192q13 0 22.5 9.5t9.5 23.5zM1022 535l18 459q0 12 -10 19q-13 11 -24 11h-220q-11 0 -24 -11q-10 -7 -10 -21l17 -457q0 -10 10 -16.5t24 -6.5h185 q14 0 23.5 6.5t10.5 16.5zM1008 1469l768 -1408q35 -63 -2 -126q-17 -29 -46.5 -46t-63.5 -17h-1536q-34 0 -63.5 17t-46.5 46q-37 63 -2 126l768 1408q17 31 47 49t65 18t65 -18t47 -49z"></path></svg></span> <span class="t" style="font-size: 18.6px; letter-spacing: -0.133px; position: relative; top: 1px;">Advanced</span><span class="arr"><svg class="fa " style="width:7.143px;height:20.000px;" viewBox="0 0 640 1792" aria-hidden="true"><path transform="translate(0,1536) scale(1,-1)" d="M627 992q0 -13 -10 -23l-393 -393l393 -393q10 -10 10 -23t-10 -23l-50 -50q-10 -10 -23 -10t-23 10l-466 466q-10 10 -10 23t10 23l466 466q10 10 23 10t23 -10l50 -50q10 -10 10 -23z"></path></svg></span></a></li><li><a href="#"><span class="icw"><svg class="fa " style="width:21.429px;height:20.000px;" viewBox="0 0 1920 1792" aria-hidden="true"><path transform="translate(0,1536) scale(1,-1)" d="M896 640q0 106 -75 181t-181 75t-181 -75t-75 -181t75 -181t181 -75t181 75t75 181zM1664 128q0 52 -38 90t-90 38t-90 -38t-38 -90q0 -53 37.5 -90.5t90.5 -37.5t90.5 37.5t37.5 90.5zM1664 1152q0 52 -38 90t-90 38t-90 -38t-38 -90q0 -53 37.5 -90.5t90.5 -37.5 t90.5 37.5t37.5 90.5zM1280 731v-185q0 -10 -7 -19.5t-16 -10.5l-155 -24q-11 -35 -32 -76q34 -48 90 -115q7 -11 7 -20q0 -12 -7 -19q-23 -30 -82.5 -89.5t-78.5 -59.5q-11 0 -21 7l-115 90q-37 -19 -77 -31q-11 -108 -23 -155q-7 -24 -30 -24h-186q-11 0 -20 7.5t-10 17.5 l-23 153q-34 10 -75 31l-118 -89q-7 -7 -20 -7q-11 0 -21 8q-144 133 -144 160q0 9 7 19q10 14 41 53t47 61q-23 44 -35 82l-152 24q-10 1 -17 9.5t-7 19.5v185q0 10 7 19.5t16 10.5l155 24q11 35 32 76q-34 48 -90 115q-7 11 -7 20q0 12 7 20q22 30 82 89t79 59q11 0 21 -7 l115 -90q34 18 77 32q11 108 23 154q7 24 30 24h186q11 0 20 -7.5t10 -17.5l23 -153q34 -10 75 -31l118 89q8 7 20 7q11 0 21 -8q144 -133 144 -160q0 -8 -7 -19q-12 -16 -42 -54t-45 -60q23 -48 34 -82l152 -23q10 -2 17 -10.5t7 -19.5zM1920 198v-140q0 -16 -149 -31 q-12 -27 -30 -52q51 -113 51 -138q0 -4 -4 -7q-122 -71 -124 -71q-8 0 -46 47t-52 68q-20 -2 -30 -2t-30 2q-14 -21 -52 -68t-46 -47q-2 0 -124 71q-4 3 -4 7q0 25 51 138q-18 25 -30 52q-149 15 -149 31v140q0 16 149 31q13 29 30 52q-51 113 -51 138q0 4 4 7q4 2 35 20 t59 34t30 16q8 0 46 -46.5t52 -67.5q20 2 30 2t30 -2q51 71 92 112l6 2q4 0 124 -70q4 -3 4 -7q0 -25 -51 -138q17 -23 30 -52q149 -15 149 -31zM1920 1222v-140q0 -16 -149 -31q-12 -27 -30 -52q51 -113 51 -138q0 -4 -4 -7q-122 -71 -124 -71q-8 0 -46 47t-52 68 q-20 -2 -30 -2t-30 2q-14 -21 -52 -68t-46 -47q-2 0 -124 71q-4 3 -4 7q0 25 51 138q-18 25 -30 52q-149 15 -149 31v140q0 16 149 31q13 29 30 52q-51 113 -51 138q0 4 4 7q4 2 35 20t59 34t30 16q8 0 46 -46.5t52 -67.5q20 2 30 2t30 -2q51 71 92 112l6 2q4 0 124 -70 q4 -3 4 -7q0 -25 -51 -138q17 -23 30 -52q149 -15 149 -31z"></path></svg></span> <span class="t" style="font-size: 18.6px; letter-spacing: 0.082px; position: relative; top: 1px;">Settings</span><span class="arr"><svg class="fa " style="width:7.143px;height:20.000px;" viewBox="0 0 640 1792" aria-hidden="true"><path transform="translate(0,1536) scale(1,-1)" d="M627 992q0 -13 -10 -23l-393 -393l393 -393q10 -10 10 -23t-10 -23l-50 -50q-10 -10 -23 -10t-23 10l-466 466q-10 10 -10 23t10 23l466 466q10 10 23 10t23 -10l50 -50q10 -10 10 -23z"></path></svg></span></a></li></ul></aside>
<div class="content-wrapper">
<section class="content-header"><h1><span class="t" style="font-size: 27.9px; letter-spacing: -0.641px; position: relative; top: 0px;">Manage </span><span class="t" style="font-size: 27.9px; letter-spacing: 0.316px; position: relative; top: 0px;">Withdraws</span></h1>
<div class="breadcrumb"><span class="bic" style="left:1370.2px"><svg class="fa " style="width:15.000px;height:15.000px;" viewBox="0 0 1792 1792" aria-hidden="true"><path transform="translate(0,1536) scale(1,-1)" d="M384 384q0 53 -37.5 90.5t-90.5 37.5t-90.5 -37.5t-37.5 -90.5t37.5 -90.5t90.5 -37.5t90.5 37.5t37.5 90.5zM576 832q0 53 -37.5 90.5t-90.5 37.5t-90.5 -37.5t-37.5 -90.5t37.5 -90.5t90.5 -37.5t90.5 37.5t37.5 90.5zM1004 351l101 382q6 26 -7.5 48.5t-38.5 29.5 t-48 -6.5t-30 -39.5l-101 -382q-60 -5 -107 -43.5t-63 -98.5q-20 -77 20 -146t117 -89t146 20t89 117q16 60 -6 117t-72 91zM1664 384q0 53 -37.5 90.5t-90.5 37.5t-90.5 -37.5t-37.5 -90.5t37.5 -90.5t90.5 -37.5t90.5 37.5t37.5 90.5zM1024 1024q0 53 -37.5 90.5 t-90.5 37.5t-90.5 -37.5t-37.5 -90.5t37.5 -90.5t90.5 -37.5t90.5 37.5t37.5 90.5zM1472 832q0 53 -37.5 90.5t-90.5 37.5t-90.5 -37.5t-37.5 -90.5t37.5 -90.5t90.5 -37.5t90.5 37.5t37.5 90.5zM1792 384q0 -261 -141 -483q-19 -29 -54 -29h-1402q-35 0 -54 29 q-141 221 -141 483q0 182 71 348t191 286t286 191t348 71t348 -71t286 -191t191 -286t71 -348z"></path></svg></span><a href="#" style="left:1395.3px"><span class="t" style="font-size: 13.95px; letter-spacing: 0.023px; position: relative; top: 0px;">Dashboard</span></a><span class="sep" style="left:1472px"><span class="t" style="font-size: 13.95px; letter-spacing: -0.672px; position: relative; top: 0px;">&gt;</span></span><span style="left:1489.6px"><span class="t" style="font-size: 13.95px; letter-spacing: -0.317px; position: relative; top: 0px;">Manage </span><span class="t" style="font-size: 13.95px; letter-spacing: 0.161px; position: relative; top: 0px;">Withdraws</span></span></div>
</section>
<section class="content">
<div class="row"><div class="col" style="left:-0.25px"><div class="small-box bg-blue"><div class="inner"><h3><span class="t" style="font-size: 45.6px; letter-spacing: 0.031px; position: relative; top: 1px;">$27.93</span></h3><p><span class="t" style="font-size: 17.44px; letter-spacing: -0.026px; position: relative; top: 0px;">Publishers </span><span class="t" style="font-size: 17.44px; letter-spacing: -0.039px; position: relative; top: 0px;">Available </span><span class="t" style="font-size: 17.44px; letter-spacing: -0.085px; position: relative; top: 0px;">Balance</span></p></div><div class="icon" style="left:236.4px;top:2.5px"><svg class="fa " style="width:120.536px;height:112.500px;" viewBox="0 0 1920 1792" aria-hidden="true"><path transform="translate(0,1536) scale(1,-1)" d="M768 384h384v96h-128v448h-114l-148 -137l77 -80q42 37 55 57h2v-288h-128v-96zM1280 640q0 -70 -21 -142t-59.5 -134t-101.5 -101t-138 -39t-138 39t-101.5 101t-59.5 134t-21 142t21 142t59.5 134t101.5 101t138 39t138 -39t101.5 -101t59.5 -134t21 -142zM1792 384 v512q-106 0 -181 75t-75 181h-1152q0 -106 -75 -181t-181 -75v-512q106 0 181 -75t75 -181h1152q0 106 75 181t181 75zM1920 1216v-1152q0 -26 -19 -45t-45 -19h-1792q-26 0 -45 19t-19 45v1152q0 26 19 45t45 19h1792q26 0 45 -19t19 -45z"></path></svg></div></div></div><div class="col" style="left:406.75px"><div class="small-box bg-red"><div class="inner"><h3><span class="t" style="font-size: 45.6px; letter-spacing: 0.094px; position: relative; top: 1px;">$0.00</span></h3><p><span class="t" style="font-size: 17.44px; letter-spacing: -0.22px; position: relative; top: 0px;">Referral </span><span class="t" style="font-size: 17.44px; letter-spacing: -0.068px; position: relative; top: 0px;">Earnings</span></p></div><div class="icon" style="left:244.4px;top:2.4px"><svg class="fa " style="width:112.500px;height:112.500px;" viewBox="0 0 1792 1792" aria-hidden="true"><path transform="translate(0,1536) scale(1,-1)" d="M1792 352v-192q0 -13 -9.5 -22.5t-22.5 -9.5h-1376v-192q0 -13 -9.5 -22.5t-22.5 -9.5q-12 0 -24 10l-319 320q-9 9 -9 22q0 14 9 23l320 320q9 9 23 9q13 0 22.5 -9.5t9.5 -22.5v-192h1376q13 0 22.5 -9.5t9.5 -22.5zM1792 896q0 -14 -9 -23l-320 -320q-9 -9 -23 -9 q-13 0 -22.5 9.5t-9.5 22.5v192h-1376q-13 0 -22.5 9.5t-9.5 22.5v192q0 13 9.5 22.5t22.5 9.5h1376v192q0 14 9 23t23 9q12 0 24 -10l319 -319q9 -9 9 -23z"></path></svg></div></div></div><div class="col" style="left:813.75px"><div class="small-box bg-green"><div class="inner"><h3><span class="t" style="font-size: 45.6px; letter-spacing: 0.094px; position: relative; top: 1px;">$0.00</span></h3><p><span class="t" style="font-size: 17.44px; letter-spacing: -0.08px; position: relative; top: 0px;">Pending </span><span class="t" style="font-size: 17.44px; letter-spacing: 0.352px; position: relative; top: 0px;">Withdrawn</span></p></div><div class="icon" style="left:244.4px;top:2.4px"><svg class="fa " style="width:112.500px;height:112.500px;" viewBox="0 0 1792 1792" aria-hidden="true"><path transform="translate(0,1536) scale(1,-1)" d="M1792 896q0 -26 -19 -45l-512 -512q-19 -19 -45 -19t-45 19t-19 45v256h-224q-98 0 -175.5 -6t-154 -21.5t-133 -42.5t-105.5 -69.5t-80 -101t-48.5 -138.5t-17.5 -181q0 -55 5 -123q0 -6 2.5 -23.5t2.5 -26.5q0 -15 -8.5 -25t-23.5 -10q-16 0 -28 17q-7 9 -13 22 t-13.5 30t-10.5 24q-127 285 -127 451q0 199 53 333q162 403 875 403h224v256q0 26 19 45t45 19t45 -19l512 -512q19 -19 19 -45z"></path></svg></div></div></div><div class="col" style="left:1219.75px"><div class="small-box bg-yellow"><div class="inner"><h3><span class="t" style="font-size: 45.6px; letter-spacing: 0.135px; position: relative; top: 1px;">$2,225.19</span></h3><p><span class="t" style="font-size: 17.44px; letter-spacing: 0.148px; position: relative; top: 0px;">Total </span><span class="t" style="font-size: 17.44px; letter-spacing: 0.328px; position: relative; top: 0px;">Withdraw</span></p></div><div class="icon" style="left:292.4px;top:2.4px"><svg class="fa " style="width:64.286px;height:112.500px;" viewBox="0 0 1024 1792" aria-hidden="true"><path transform="translate(0,1536) scale(1,-1)" d="M978 351q0 -153 -99.5 -263.5t-258.5 -136.5v-175q0 -14 -9 -23t-23 -9h-135q-13 0 -22.5 9.5t-9.5 22.5v175q-66 9 -127.5 31t-101.5 44.5t-74 48t-46.5 37.5t-17.5 18q-17 21 -2 41l103 135q7 10 23 12q15 2 24 -9l2 -2q113 -99 243 -125q37 -8 74 -8q81 0 142.5 43 t61.5 122q0 28 -15 53t-33.5 42t-58.5 37.5t-66 32t-80 32.5q-39 16 -61.5 25t-61.5 26.5t-62.5 31t-56.5 35.5t-53.5 42.5t-43.5 49t-35.5 58t-21 66.5t-8.5 78q0 138 98 242t255 134v180q0 13 9.5 22.5t22.5 9.5h135q14 0 23 -9t9 -23v-176q57 -6 110.5 -23t87 -33.5 t63.5 -37.5t39 -29t15 -14q17 -18 5 -38l-81 -146q-8 -15 -23 -16q-14 -3 -27 7q-3 3 -14.5 12t-39 26.5t-58.5 32t-74.5 26t-85.5 11.5q-95 0 -155 -43t-60 -111q0 -26 8.5 -48t29.5 -41.5t39.5 -33t56 -31t60.5 -27t70 -27.5q53 -20 81 -31.5t76 -35t75.5 -42.5t62 -50 t53 -63.5t31.5 -76.5t13 -94z"></path></svg></div></div></div></div>
<div class="box box-filter">
<div class="fc" style="left:12.75px;width:230px"><span class="t ph" style="font-size: 16.28px; letter-spacing: -0.412px; position: relative; top: 0px;">User </span><span class="t ph" style="font-size: 16.28px; letter-spacing: 0.375px; position: relative; top: 0px;">Id</span></div>
<div class="fc sel" style="left:247px;width:132px"><span class="t sv" style="font-size: 16.28px; letter-spacing: -0.049px; position: relative; top: 0px;">Status</span><svg class="chev" style="left:112.5px" width="13" height="9" viewBox="0 0 13 9"><path d="M1.2 1.4 L6.5 6.8 L11.8 1.4" fill="none" stroke="#3d3d3d" stroke-width="1.75"></path></svg></div>
<div class="fc sel" style="left:383px;width:202px"><span class="t sv" style="font-size: 16.28px; letter-spacing: 0.175px; position: relative; top: 0px;">Withdrawal </span><span class="t sv" style="font-size: 16.28px; letter-spacing: 0.268px; position: relative; top: 0px;">Method</span><svg class="chev" style="left:182.3px" width="13" height="9" viewBox="0 0 13 9"><path d="M1.2 1.4 L6.5 6.8 L11.8 1.4" fill="none" stroke="#3d3d3d" stroke-width="1.75"></path></svg></div>
<div class="btn-filter"><span class="t" style="font-size: 13.95px; letter-spacing: 0.242px; position: relative; top: 0px;">Filter</span></div>
<a class="btn-reset" href="#"><span class="t" style="font-size: 13.95px; letter-spacing: -0.388px; position: relative; top: 0px;">Reset</span></a>
</div>
<div class="box box-primary">
<table style="table-layout: fixed; width: 1563.75px;"><colgroup><col style="width: 44.08px;"><col style="width: 66.66px;"><col style="width: 173.91px;"><col style="width: 111.8px;"><col style="width: 205.53px;"><col style="width: 190.44px;"><col style="width: 152.34px;"><col style="width: 213.16px;"><col style="width: 321.42px;"><col style="width: 84.42px;"></colgroup><thead><tr><th><a href="#"><span class="t" style="font-size: 18.6px; letter-spacing: 0.07px; position: relative; top: 0px;">ID</span></a></th><th><span class="t" style="font-size: 18.6px; letter-spacing: -0.258px; position: relative; top: 0px;">User</span></th><th><a href="#"><span class="t" style="font-size: 18.6px; letter-spacing: 0.055px; position: relative; top: 0px;">Date</span></a></th><th><span class="t" style="font-size: 18.6px; letter-spacing: -0.159px; position: relative; top: 0px;">Status</span></th><th><a href="#"><span class="t" style="font-size: 18.6px; letter-spacing: -0.131px; position: relative; top: 0px;">Publisher </span><span class="t" style="font-size: 18.6px; letter-spacing: -0.27px; position: relative; top: 0px;">Earnings</span></a></th><th><a href="#"><span class="t" style="font-size: 18.6px; letter-spacing: -0.059px; position: relative; top: 0px;">Referral </span><span class="t" style="font-size: 18.6px; letter-spacing: -0.27px; position: relative; top: 0px;">Earnings</span></a></th><th><span class="t" style="font-size: 18.6px; letter-spacing: -0.086px; position: relative; top: 0px;">Total </span><span class="t" style="font-size: 18.6px; letter-spacing: -0.01px; position: relative; top: 0px;">Amount</span></th><th><span class="t" style="font-size: 18.6px; letter-spacing: 0.151px; position: relative; top: 0px;">Withdrawal </span><span class="t" style="font-size: 18.6px; letter-spacing: 0.159px; position: relative; top: 0px;">Method</span></th><th><span class="t" style="font-size: 18.6px; letter-spacing: 0.151px; position: relative; top: 0px;">Withdrawal </span><span class="t" style="font-size: 18.6px; letter-spacing: -0.536px; position: relative; top: 0px;">Account</span></th><th><span class="t" style="font-size: 18.6px; letter-spacing: -0.25px; position: relative; top: 0px;">Action</span></th></tr></thead><tbody><tr><td><a href="#"><span class="t" style="font-size: 18.6px; letter-spacing: -0.398px; position: relative; top: -0.5px;">29</span></a></td><td></td><td><span class="t" style="font-size: 18.6px; letter-spacing: 0.09px; position: relative; top: -0.5px;">3/2/21, </span><span class="t" style="font-size: 18.6px; letter-spacing: -0.509px; position: relative; top: -0.5px;">1:07 </span><span class="t" style="font-size: 18.6px; letter-spacing: -1.008px; position: relative; top: -0.5px;">PM</span></td><td><span class="t" style="font-size: 18.6px; letter-spacing: 0.199px; position: relative; top: -0.5px;">Complete</span></td><td><span class="t" style="font-size: 18.6px; letter-spacing: -0.371px; position: relative; top: -0.5px;">$103.00</span></td><td><span class="t" style="font-size: 18.6px; letter-spacing: -0.356px; position: relative; top: -0.5px;">$0.00</span></td><td><span class="t" style="font-size: 18.6px; letter-spacing: -0.371px; position: relative; top: -0.5px;">$103.00</span></td><td><span class="t" style="font-size: 18.6px; letter-spacing: -0.563px; position: relative; top: -0.5px;">PayPal</span></td><td><span class="t" style="font-size: 18.6px; letter-spacing: 0.183px; position: relative; top: -0.5px;">rosagriffin08@gmail.com</span></td><td><a class="btn-view" href="#"><span class="t" style="font-size: 13.95px; letter-spacing: 0.074px; position: relative; top: 0px;">View</span></a></td></tr><tr><td><a href="#"><span class="t" style="font-size: 18.6px; letter-spacing: -0.398px; position: relative; top: -0.5px;">28</span></a></td><td></td><td><span class="t" style="font-size: 18.6px; letter-spacing: 0.09px; position: relative; top: -0.5px;">3/2/21, </span><span class="t" style="font-size: 18.6px; letter-spacing: -0.509px; position: relative; top: -0.5px;">4:07 </span><span class="t" style="font-size: 18.6px; letter-spacing: -1.008px; position: relative; top: -0.5px;">PM</span></td><td><span class="t" style="font-size: 18.6px; letter-spacing: 0.199px; position: relative; top: -0.5px;">Complete</span></td><td><span class="t" style="font-size: 18.6px; letter-spacing: -0.365px; position: relative; top: -0.5px;">$68.00</span></td><td><span class="t" style="font-size: 18.6px; letter-spacing: -0.356px; position: relative; top: -0.5px;">$0.00</span></td><td><span class="t" style="font-size: 18.6px; letter-spacing: -0.365px; position: relative; top: -0.5px;">$68.00</span></td><td><span class="t" style="font-size: 18.6px; letter-spacing: -0.344px; position: relative; top: -0.5px;">payza</span></td><td><span class="t" style="font-size: 18.6px; letter-spacing: 0.272px; position: relative; top: -0.5px;">ruliardianto987@gmail.com</span></td><td><a class="btn-view" href="#"><span class="t" style="font-size: 13.95px; letter-spacing: 0.074px; position: relative; top: 0px;">View</span></a></td></tr><tr><td><a href="#"><span class="t" style="font-size: 18.6px; letter-spacing: -0.398px; position: relative; top: -0.5px;">27</span></a></td><td></td><td><span class="t" style="font-size: 18.6px; letter-spacing: 0.09px; position: relative; top: -0.5px;">3/2/21, </span><span class="t" style="font-size: 18.6px; letter-spacing: -0.492px; position: relative; top: -0.5px;">10:07 </span><span class="t" style="font-size: 18.6px; letter-spacing: -1.25px; position: relative; top: -0.5px;">AM</span></td><td><span class="t" style="font-size: 18.6px; letter-spacing: 0.199px; position: relative; top: -0.5px;">Complete</span></td><td><span class="t" style="font-size: 18.6px; letter-spacing: -0.365px; position: relative; top: -0.5px;">$16.05</span></td><td><span class="t" style="font-size: 18.6px; letter-spacing: -0.356px; position: relative; top: -0.5px;">$0.00</span></td><td><span class="t" style="font-size: 18.6px; letter-spacing: -0.365px; position: relative; top: -0.5px;">$16.05</span></td><td><span class="t" style="font-size: 18.6px; letter-spacing: 0.526px; position: relative; top: -0.5px;">skrill</span></td><td><span class="t" style="font-size: 18.6px; letter-spacing: 0.325px; position: relative; top: -0.5px;">tithanurmayanti976@gmail.com</span></td><td><a class="btn-view" href="#"><span class="t" style="font-size: 13.95px; letter-spacing: 0.074px; position: relative; top: 0px;">View</span></a></td></tr><tr><td><a href="#"><span class="t" style="font-size: 18.6px; letter-spacing: -0.398px; position: relative; top: -0.5px;">26</span></a></td><td></td><td><span class="t" style="font-size: 18.6px; letter-spacing: 0.09px; position: relative; top: -0.5px;">3/2/21, </span><span class="t" style="font-size: 18.6px; letter-spacing: -0.509px; position: relative; top: -0.5px;">4:07 </span><span class="t" style="font-size: 18.6px; letter-spacing: -1.008px; position: relative; top: -0.5px;">PM</span></td><td><span class="t" style="font-size: 18.6px; letter-spacing: 0.199px; position: relative; top: -0.5px;">Complete</span></td><td><span class="t" style="font-size: 18.6px; letter-spacing: -0.371px; position: relative; top: -0.5px;">$138.56</span></td><td><span class="t" style="font-size: 18.6px; letter-spacing: -0.356px; position: relative; top: -0.5px;">$0.00</span></td><td><span class="t" style="font-size: 18.6px; letter-spacing: -0.371px; position: relative; top: -0.5px;">$138.56</span></td><td><span class="t" style="font-size: 18.6px; letter-spacing: -0.172px; position: relative; top: -0.5px;">Bank </span><span class="t" style="font-size: 18.6px; letter-spacing: -0.047px; position: relative; top: -0.5px;">Transfer</span></td><td><span class="t" style="font-size: 18.6px; letter-spacing: 0.073px; position: relative; top: -0.5px;">yusepsupendi821@gmail.com</span></td><td><a class="btn-view" href="#"><span class="t" style="font-size: 13.95px; letter-spacing: 0.074px; position: relative; top: 0px;">View</span></a></td></tr><tr><td><a href="#"><span class="t" style="font-size: 18.6px; letter-spacing: -0.398px; position: relative; top: -0.5px;">25</span></a></td><td></td><td><span class="t" style="font-size: 18.6px; letter-spacing: 0.09px; position: relative; top: -0.5px;">3/2/21, </span><span class="t" style="font-size: 18.6px; letter-spacing: -0.509px; position: relative; top: -0.5px;">3:07 </span><span class="t" style="font-size: 18.6px; letter-spacing: -1.008px; position: relative; top: -0.5px;">PM</span></td><td><span class="t" style="font-size: 18.6px; letter-spacing: 0.199px; position: relative; top: -0.5px;">Complete</span></td><td><span class="t" style="font-size: 18.6px; letter-spacing: -0.371px; position: relative; top: -0.5px;">$478.14</span></td><td><span class="t" style="font-size: 18.6px; letter-spacing: -0.356px; position: relative; top: -0.5px;">$0.00</span></td><td><span class="t" style="font-size: 18.6px; letter-spacing: -0.371px; position: relative; top: -0.5px;">$478.14</span></td><td><span class="t" style="font-size: 18.6px; letter-spacing: -0.172px; position: relative; top: -0.5px;">Bank </span><span class="t" style="font-size: 18.6px; letter-spacing: -0.047px; position: relative; top: -0.5px;">Transfer</span></td><td><span class="t" style="font-size: 18.6px; letter-spacing: 0.089px; position: relative; top: -0.5px;">agamyuzali@gmail.com</span></td><td><a class="btn-view" href="#"><span class="t" style="font-size: 13.95px; letter-spacing: 0.074px; position: relative; top: 0px;">View</span></a></td></tr><tr><td><a href="#"><span class="t" style="font-size: 18.6px; letter-spacing: -0.398px; position: relative; top: -0.5px;">24</span></a></td><td></td><td><span class="t" style="font-size: 18.6px; letter-spacing: 0.09px; position: relative; top: -0.5px;">3/2/21, </span><span class="t" style="font-size: 18.6px; letter-spacing: -0.509px; position: relative; top: -0.5px;">3:07 </span><span class="t" style="font-size: 18.6px; letter-spacing: -1.008px; position: relative; top: -0.5px;">PM</span></td><td><span class="t" style="font-size: 18.6px; letter-spacing: 0.199px; position: relative; top: -0.5px;">Complete</span></td><td><span class="t" style="font-size: 18.6px; letter-spacing: -0.371px; position: relative; top: -0.5px;">$275.90</span></td><td><span class="t" style="font-size: 18.6px; letter-spacing: -0.356px; position: relative; top: -0.5px;">$0.00</span></td><td><span class="t" style="font-size: 18.6px; letter-spacing: -0.371px; position: relative; top: -0.5px;">$275.90</span></td><td><span class="t" style="font-size: 18.6px; letter-spacing: 0.016px; position: relative; top: -0.5px;">payeer</span></td><td><span class="t" style="font-size: 18.6px; letter-spacing: 0.195px; position: relative; top: -0.5px;">bugi.kusgiman@gmail.com</span></td><td><a class="btn-view" href="#"><span class="t" style="font-size: 13.95px; letter-spacing: 0.074px; position: relative; top: 0px;">View</span></a></td></tr><tr><td><a href="#"><span class="t" style="font-size: 18.6px; letter-spacing: -0.398px; position: relative; top: -0.5px;">23</span></a></td><td></td><td><span class="t" style="font-size: 18.6px; letter-spacing: 0.09px; position: relative; top: -0.5px;">3/2/21, </span><span class="t" style="font-size: 18.6px; letter-spacing: -0.263px; position: relative; top: -0.5px;">11:07 </span><span class="t" style="font-size: 18.6px; letter-spacing: -1.25px; position: relative; top: -0.5px;">AM</span></td><td><span class="t" style="font-size: 18.6px; letter-spacing: 0.199px; position: relative; top: -0.5px;">Complete</span></td><td><span class="t" style="font-size: 18.6px; letter-spacing: -0.365px; position: relative; top: -0.5px;">$82.89</span></td><td><span class="t" style="font-size: 18.6px; letter-spacing: -0.356px; position: relative; top: -0.5px;">$0.00</span></td><td><span class="t" style="font-size: 18.6px; letter-spacing: -0.365px; position: relative; top: -0.5px;">$82.89</span></td><td><span class="t" style="font-size: 18.6px; letter-spacing: -0.344px; position: relative; top: -0.5px;">payza</span></td><td><span class="t" style="font-size: 18.6px; letter-spacing: 0.087px; position: relative; top: -0.5px;">cepiandia762@gmail.com</span></td><td><a class="btn-view" href="#"><span class="t" style="font-size: 13.95px; letter-spacing: 0.074px; position: relative; top: 0px;">View</span></a></td></tr><tr><td><a href="#"><span class="t" style="font-size: 18.6px; letter-spacing: -0.398px; position: relative; top: -0.5px;">22</span></a></td><td></td><td><span class="t" style="font-size: 18.6px; letter-spacing: 0.09px; position: relative; top: -0.5px;">3/2/21, </span><span class="t" style="font-size: 18.6px; letter-spacing: -0.509px; position: relative; top: -0.5px;">1:06 </span><span class="t" style="font-size: 18.6px; letter-spacing: -1.008px; position: relative; top: -0.5px;">PM</span></td><td><span class="t" style="font-size: 18.6px; letter-spacing: 0.199px; position: relative; top: -0.5px;">Complete</span></td><td><span class="t" style="font-size: 18.6px; letter-spacing: -0.371px; position: relative; top: -0.5px;">$122.12</span></td><td><span class="t" style="font-size: 18.6px; letter-spacing: -0.356px; position: relative; top: -0.5px;">$0.00</span></td><td><span class="t" style="font-size: 18.6px; letter-spacing: -0.371px; position: relative; top: -0.5px;">$122.12</span></td><td><span class="t" style="font-size: 18.6px; letter-spacing: -0.563px; position: relative; top: -0.5px;">PayPal</span></td><td><span class="t" style="font-size: 18.6px; letter-spacing: 0.198px; position: relative; top: -0.5px;">dinomarvela423@gmail.com</span></td><td><a class="btn-view" href="#"><span class="t" style="font-size: 13.95px; letter-spacing: 0.074px; position: relative; top: 0px;">View</span></a></td></tr><tr><td><a href="#"><span class="t" style="font-size: 18.6px; letter-spacing: -0.398px; position: relative; top: -0.5px;">21</span></a></td><td></td><td><span class="t" style="font-size: 18.6px; letter-spacing: 0.09px; position: relative; top: -0.5px;">3/2/21, </span><span class="t" style="font-size: 18.6px; letter-spacing: -0.492px; position: relative; top: -0.5px;">12:06 </span><span class="t" style="font-size: 18.6px; letter-spacing: -1.008px; position: relative; top: -0.5px;">PM</span></td><td><span class="t" style="font-size: 18.6px; letter-spacing: 0.199px; position: relative; top: -0.5px;">Complete</span></td><td><span class="t" style="font-size: 18.6px; letter-spacing: -0.371px; position: relative; top: -0.5px;">$159.57</span></td><td><span class="t" style="font-size: 18.6px; letter-spacing: -0.356px; position: relative; top: -0.5px;">$0.00</span></td><td><span class="t" style="font-size: 18.6px; letter-spacing: -0.371px; position: relative; top: -0.5px;">$159.57</span></td><td><span class="t" style="font-size: 18.6px; letter-spacing: 0.357px; position: relative; top: -0.5px;">perfectmoney</span></td><td><span class="t" style="font-size: 18.6px; letter-spacing: 0.259px; position: relative; top: -0.5px;">diowardianto942@gmail.com</span></td><td><a class="btn-view" href="#"><span class="t" style="font-size: 13.95px; letter-spacing: 0.074px; position: relative; top: 0px;">View</span></a></td></tr><tr><td><a href="#"><span class="t" style="font-size: 18.6px; letter-spacing: -0.398px; position: relative; top: -0.5px;">20</span></a></td><td></td><td><span class="t" style="font-size: 18.6px; letter-spacing: 0.09px; position: relative; top: -0.5px;">3/2/21, </span><span class="t" style="font-size: 18.6px; letter-spacing: -0.509px; position: relative; top: -0.5px;">4:06 </span><span class="t" style="font-size: 18.6px; letter-spacing: -1.008px; position: relative; top: -0.5px;">PM</span></td><td><span class="t" style="font-size: 18.6px; letter-spacing: 0.199px; position: relative; top: -0.5px;">Complete</span></td><td><span class="t" style="font-size: 18.6px; letter-spacing: -0.365px; position: relative; top: -0.5px;">$76.98</span></td><td><span class="t" style="font-size: 18.6px; letter-spacing: -0.356px; position: relative; top: -0.5px;">$0.00</span></td><td><span class="t" style="font-size: 18.6px; letter-spacing: -0.365px; position: relative; top: -0.5px;">$76.98</span></td><td><span class="t" style="font-size: 18.6px; letter-spacing: -0.344px; position: relative; top: -0.5px;">payza</span></td><td><span class="t" style="font-size: 18.6px; letter-spacing: 0.112px; position: relative; top: -0.5px;">canarycuing26@gmail.com</span></td><td><a class="btn-view" href="#"><span class="t" style="font-size: 13.95px; letter-spacing: 0.074px; position: relative; top: 0px;">View</span></a></td></tr></tbody></table>
<ul class="notes"><li><span class="t" style="font-size: 18.6px; letter-spacing: -0.094px; position: relative; top: 1px;">Pending: </span><span class="t" style="font-size: 18.6px; letter-spacing: -0.422px; position: relative; top: 1px;">The </span><span class="t" style="font-size: 18.6px; letter-spacing: 0.246px; position: relative; top: 1px;">payment </span><span class="t" style="font-size: 18.6px; letter-spacing: -0.432px; position: relative; top: 1px;">is </span><span class="t" style="font-size: 18.6px; letter-spacing: 0.042px; position: relative; top: 1px;">being </span><span class="t" style="font-size: 18.6px; letter-spacing: -0.102px; position: relative; top: 1px;">checked </span><span class="t" style="font-size: 18.6px; letter-spacing: -0.161px; position: relative; top: 1px;">by </span><span class="t" style="font-size: 18.6px; letter-spacing: 0.156px; position: relative; top: 1px;">our </span><span class="t" style="font-size: 18.6px; letter-spacing: 0.253px; position: relative; top: 1px;">team.</span></li><li><span class="t" style="font-size: 18.6px; letter-spacing: -0.009px; position: relative; top: 1px;">Approved: </span><span class="t" style="font-size: 18.6px; letter-spacing: -0.422px; position: relative; top: 1px;">The </span><span class="t" style="font-size: 18.6px; letter-spacing: 0.246px; position: relative; top: 1px;">payment </span><span class="t" style="font-size: 18.6px; letter-spacing: -0.453px; position: relative; top: 1px;">has </span><span class="t" style="font-size: 18.6px; letter-spacing: -0.138px; position: relative; top: 1px;">been </span><span class="t" style="font-size: 18.6px; letter-spacing: 0.153px; position: relative; top: 1px;">approved </span><span class="t" style="font-size: 18.6px; letter-spacing: -0.016px; position: relative; top: 1px;">and </span><span class="t" style="font-size: 18.6px; letter-spacing: -0.432px; position: relative; top: 1px;">is </span><span class="t" style="font-size: 18.6px; letter-spacing: 0.355px; position: relative; top: 1px;">waiting </span><span class="t" style="font-size: 18.6px; letter-spacing: 0.214px; position: relative; top: 1px;">to </span><span class="t" style="font-size: 18.6px; letter-spacing: -0.292px; position: relative; top: 1px;">be </span><span class="t" style="font-size: 18.6px; letter-spacing: 0.159px; position: relative; top: 1px;">sent.</span></li><li><span class="t" style="font-size: 18.6px; letter-spacing: 0.023px; position: relative; top: 1px;">Complete: </span><span class="t" style="font-size: 18.6px; letter-spacing: -0.422px; position: relative; top: 1px;">The </span><span class="t" style="font-size: 18.6px; letter-spacing: 0.246px; position: relative; top: 1px;">payment </span><span class="t" style="font-size: 18.6px; letter-spacing: -0.453px; position: relative; top: 1px;">has </span><span class="t" style="font-size: 18.6px; letter-spacing: -0.138px; position: relative; top: 1px;">been </span><span class="t" style="font-size: 18.6px; letter-spacing: -0.138px; position: relative; top: 1px;">successfully </span><span class="t" style="font-size: 18.6px; letter-spacing: -0.063px; position: relative; top: 1px;">sent </span><span class="t" style="font-size: 18.6px; letter-spacing: 0.214px; position: relative; top: 1px;">to </span><span class="t" style="font-size: 18.6px; letter-spacing: 0.119px; position: relative; top: 1px;">your </span><span class="t" style="font-size: 18.6px; letter-spacing: 0.215px; position: relative; top: 1px;">account.</span></li><li><span class="t" style="font-size: 18.6px; letter-spacing: -0.161px; position: relative; top: 1px;">Cancelled: </span><span class="t" style="font-size: 18.6px; letter-spacing: -0.422px; position: relative; top: 1px;">The </span><span class="t" style="font-size: 18.6px; letter-spacing: 0.246px; position: relative; top: 1px;">payment </span><span class="t" style="font-size: 18.6px; letter-spacing: -0.453px; position: relative; top: 1px;">has </span><span class="t" style="font-size: 18.6px; letter-spacing: -0.138px; position: relative; top: 1px;">been </span><span class="t" style="font-size: 18.6px; letter-spacing: 0.103px; position: relative; top: 1px;">cancelled.</span></li><li><span class="t" style="font-size: 18.6px; letter-spacing: -0.041px; position: relative; top: 1px;">Returned: </span><span class="t" style="font-size: 18.6px; letter-spacing: -0.422px; position: relative; top: 1px;">The </span><span class="t" style="font-size: 18.6px; letter-spacing: 0.246px; position: relative; top: 1px;">payment </span><span class="t" style="font-size: 18.6px; letter-spacing: -0.453px; position: relative; top: 1px;">has </span><span class="t" style="font-size: 18.6px; letter-spacing: -0.138px; position: relative; top: 1px;">been </span><span class="t" style="font-size: 18.6px; letter-spacing: 0.286px; position: relative; top: 1px;">returned </span><span class="t" style="font-size: 18.6px; letter-spacing: 0.214px; position: relative; top: 1px;">to </span><span class="t" style="font-size: 18.6px; letter-spacing: 0.119px; position: relative; top: 1px;">your </span><span class="t" style="font-size: 18.6px; letter-spacing: 0.215px; position: relative; top: 1px;">account.</span></li></ul>
</div>
</section>
</div>
<div class="sb-track"></div><div class="sb-thumb"></div>
<svg class="cursor" width="16" height="24" viewBox="0 0 16 24"><path d="M1.5 1.5 L1.5 17.5 L5.3 14 L8 20.3 L10.3 19.3 L7.6 13.2 L12.8 13.2 Z" fill="#fff" stroke="#000" stroke-width="1.1" stroke-linejoin="round"></path></svg>


</body></html>
